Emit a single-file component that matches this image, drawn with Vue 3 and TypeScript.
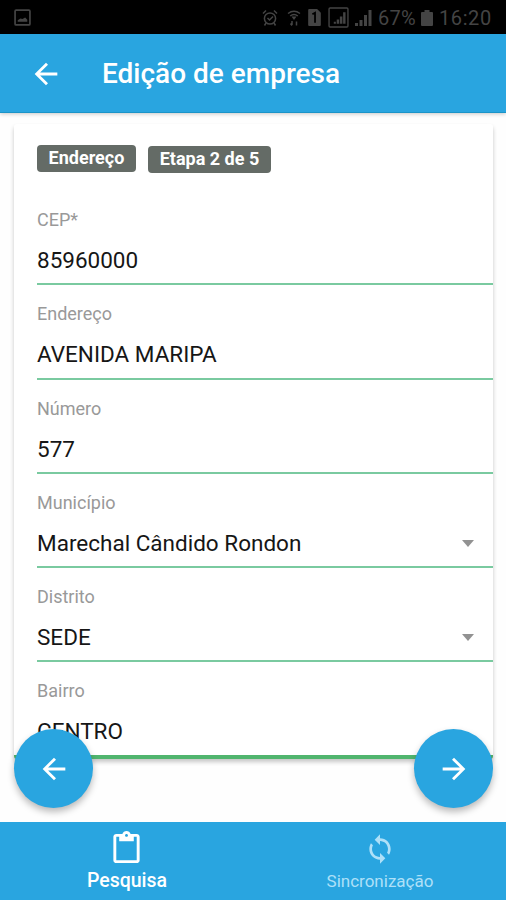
<script setup lang="ts">
interface Field {
  label: string
  value: string
  select?: boolean
}

const fields: Field[] = [
  { label: 'CEP*', value: '85960000' },
  { label: 'Endereço', value: 'AVENIDA MARIPA' },
  { label: 'Número', value: '577' },
  { label: 'Município', value: 'Marechal Cândido Rondon', select: true },
  { label: 'Distrito', value: 'SEDE', select: true },
  { label: 'Bairro', value: 'CENTRO' },
]

const arrowBack = 'M20 11H7.83l5.59-5.59L12 4l-8 8 8 8 1.41-1.41L7.83 13H20v-2z'
const arrowForward = 'M12 4l-1.41 1.41L16.17 11H4v2h12.17l-5.58 5.59L12 20l8-8z'
</script>

<template>
  <div class="screen">
    <div class="status">
      <svg class="picture" viewBox="0 0 16 16">
        <rect x="1" y="1" width="14" height="14" rx="1" fill="none" stroke="currentColor" stroke-width="1.6" />
        <path d="M3.5 12V10.500l2.500-1.500 2 .5 2.500-1.500 2 2V12z" fill="currentColor" />
      </svg>
      <div class="status-right">
        <svg class="alarm" viewBox="0 0 16 18" fill="none" stroke="currentColor" stroke-width="1.5">
          <circle cx="8" cy="9.500" r="5.600" />
          <path d="M5.500 9l2 2 3.500-3.500M1 4.500L4 1.500M15 4.500L12 1.500M4 14l-1.500 2.500M12 14l1.500 2.500" />
        </svg>
        <svg class="wifi" viewBox="0 0 14 18" fill="none" stroke="currentColor" stroke-width="1.500">
          <path d="M1 4.500Q7 0 13 4.500M3.200 7Q7 4 10.800 7" />
          <path d="M4.500 7.500h5L7 11z" fill="currentColor" stroke="none" />
          <path d="M5 12v4M3.500 14.500L5 16.500M9.500 16.500v-4" />
        </svg>
        <svg class="sim" viewBox="0 0 14 18">
          <path d="M2 1h7.500L13 4.500V16a1 1 0 0 1-1 1H2a1 1 0 0 1-1-1V2a1 1 0 0 1 1-1z" fill="currentColor" />
          <path d="M5 6l2.500-1.500V14" fill="none" stroke="#000" stroke-width="1.700" />
        </svg>
        <svg class="signal-box" viewBox="0 0 20 20">
          <rect x="1" y="1" width="18" height="18" rx="1" fill="none" stroke="currentColor" stroke-width="1.300" />
          <path d="M5.500 16v-2h2v2zM8.300 16v-4h2.300v4zM11.300 16V9h2.400v7zM14.400 16V5h2.300v11z" fill="currentColor" />
        </svg>
        <svg class="signal" viewBox="0 0 17 18">
          <path d="M0 17v-3h3v3zM4.500 17v-6h3v6zM9 17V6h3v11zM13.500 17V1h3v16z" fill="currentColor" />
        </svg>
        <span class="percent">67%</span>
        <svg class="battery" viewBox="0 0 12 18">
          <path d="M3.500 1h5v2H11a1 1 0 0 1 1 1v12a1 1 0 0 1-1 1H1a1 1 0 0 1-1-1V4a1 1 0 0 1 1-1h2.500z" fill="currentColor" />
        </svg>
        <span class="clock">16:20</span>
      </div>
    </div>

    <header class="toolbar">
      <svg class="arrow" viewBox="0 0 24 24"><path :d="arrowBack" /></svg>
      <h1>Edição de empresa</h1>
    </header>

    <main class="content">
      <section class="card">
        <div class="badges">
          <span class="badge">Endereço</span>
          <span class="badge step">Etapa 2 de 5</span>
        </div>
        <div v-for="field in fields" :key="field.label" class="field">
          <label>{{ field.label }}</label>
          <div class="value">
            <span>{{ field.value }}</span>
            <i v-if="field.select" class="caret"></i>
          </div>
        </div>
      </section>
      <button class="fab previous"><svg class="arrow" viewBox="0 0 24 24"><path :d="arrowBack" /></svg></button>
      <button class="fab next"><svg class="arrow" viewBox="0 0 24 24"><path :d="arrowForward" /></svg></button>
    </main>

    <nav class="tabs">
      <a class="tab active">
        <svg viewBox="0 0 24 24"><path d="M19 2h-4.180C14.400.840 13.300 0 12 0S9.600.840 9.180 2H5c-1.100 0-2 .9-2 2v16c0 1.100.9 2 2 2h14c1.100 0 2-.9 2-2V4c0-1.100-.9-2-2-2zm-7 0c.550 0 1 .450 1 1s-.450 1-1 1-1-.450-1-1 .450-1 1-1zm7 18H5V4h2v3h10V4h2v16z" /></svg>
        <span>Pesquisa</span>
      </a>
      <a class="tab">
        <svg viewBox="0 0 24 24"><path d="M12 4V1L8 5l4 4V6c3.310 0 6 2.690 6 6 0 1.010-.250 1.970-.700 2.800l1.460 1.460C19.540 15.030 20 13.570 20 12c0-4.420-3.580-8-8-8zm0 14c-3.310 0-6-2.690-6-6 0-1.010.250-1.970.700-2.800L5.240 7.740C4.460 8.970 4 10.430 4 12c0 4.420 3.580 8 8 8v3l4-4-4-4v3z" /></svg>
        <span>Sincronização</span>
      </a>
    </nav>
  </div>
</template>

<style>
body {
  margin: 0;
}
</style>

<style scoped>
.screen {
  width: 506px;
  height: 900px;
  display: flex;
  flex-direction: column;
  overflow: hidden;
  background: #fefefe;
  font-family: Roboto, "Liberation Sans", sans-serif;
}
.status {
  height: 34px;
  flex: none;
  box-sizing: border-box;
  display: flex;
  align-items: center;
  justify-content: space-between;
  padding: 1px 14px 0;
  background: #000;
  color: #444;
}
.picture {
  width: 17px;
  height: 17px;
}
.status-right {
  display: flex;
  align-items: center;
  font-size: 20px;
  line-height: 33px;
}
.alarm {
  width: 16px;
  height: 18px;
  margin-right: 9px;
}
.wifi {
  width: 14px;
  height: 18px;
  margin-right: 6px;
}
.sim {
  width: 15px;
  height: 19px;
  margin-right: 6px;
}
.signal-box {
  width: 21px;
  height: 21px;
  margin-right: 6px;
}
.signal {
  width: 17px;
  height: 18px;
  margin-right: 6px;
}
.percent {
  width: 39px;
  margin-right: 4px;
  letter-spacing: 0.3px;
  white-space: nowrap;
}
.battery {
  width: 12px;
  height: 18px;
  margin-right: 6px;
}
.clock {
  width: 53px;
  letter-spacing: 0.6px;
}
.percent,
.clock {
  padding-top: 1px;
}
.toolbar {
  height: 79px;
  flex: none;
  box-sizing: border-box;
  display: flex;
  align-items: center;
  padding: 1px 0 0 29px;
  background: #29a5e0;
  border-bottom: 1px solid #1b94c8;
  box-shadow: 0 1px 4px rgba(0, 0, 0, 0.22);
  color: #fff;
  z-index: 1;
}
.arrow {
  width: 34px;
  height: 34px;
  fill: #fff;
}
h1 {
  margin: 1px 0 0 39px;
  font-size: 28px;
  font-weight: 500;
  line-height: 36px;
}
.content {
  position: relative;
  flex: 1;
  padding: 11px 13px 0 14px;
}
.card {
  height: 635px;
  box-sizing: border-box;
  padding: 21px 0 0 23px;
  background: #fff;
  border-bottom: 4px solid #50b56e;
  border-radius: 3px;
  box-shadow: 0 3px 4px rgba(0, 0, 0, 0.22);
}
.badges {
  display: flex;
  align-items: flex-start;
  gap: 12px;
  height: 46px;
}
.badge {
  width: 99px;
  height: 27px;
  border-radius: 4px;
  background: #646b66;
  color: #fff;
  font-size: 18px;
  font-weight: 700;
  line-height: 26px;
  text-align: center;
  white-space: nowrap;
}
.step {
  width: 123px;
  margin-top: 1px;
}
.field {
  height: 94.25px;
  box-sizing: border-box;
  padding-top: 17px;
  border-bottom: 2px solid #7acaa0;
}
.field:last-child {
  border-bottom: 0;
}
label {
  display: block;
  font-size: 18px;
  line-height: 24px;
  color: #999;
}
.value {
  display: flex;
  justify-content: space-between;
  align-items: center;
  margin-top: 12px;
  padding-right: 19px;
  font-size: 22.5px;
  line-height: 32px;
  color: #161616;
}
.caret {
  margin-top: 1px;
  border: 6.5px solid transparent;
  border-top: 7px solid #929292;
  border-bottom: 0;
}
.fab {
  position: absolute;
  bottom: 14px;
  width: 79px;
  height: 79px;
  display: flex;
  align-items: center;
  justify-content: center;
  padding: 0;
  border: 0;
  border-radius: 50%;
  background: #29a5e0;
  box-shadow: 0 4px 7px rgba(0, 0, 0, 0.27);
}
.previous {
  left: 14px;
}
.next {
  right: 13px;
}
.tabs {
  height: 78px;
  flex: none;
  display: flex;
  background: #29a5e0;
}
.tab {
  flex: 1;
  display: flex;
  flex-direction: column;
  align-items: center;
  color: #aee0f8;
  font-size: 17px;
}
.tab svg {
  width: 32px;
  height: 32px;
  margin-top: 11px;
  fill: currentColor;
}
.tab span {
  margin-top: 4px;
  padding-left: 1px;
  line-height: 24px;
}
.active {
  color: #fff;
  font-size: 19.5px;
  font-weight: 500;
}
.active svg {
  width: 35px;
  height: 35px;
  margin-top: 9px;
}
.active span {
  margin-top: 3px;
}
</style>
